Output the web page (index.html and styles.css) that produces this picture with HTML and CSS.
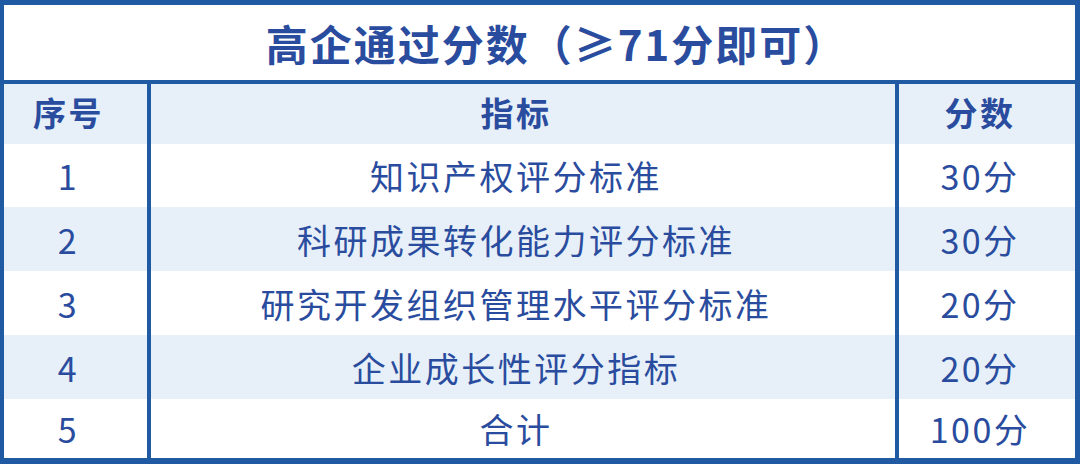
FILE: index.html
```html
<!DOCTYPE html>
<html lang="zh-CN">
<head>
<meta charset="utf-8">
<link rel="stylesheet" href="styles.css">
</head>
<body>
<div class="frame">
  <div class="title">高企通过分数（≥71分即可）</div>
  <div class="grid">
    <div class="cell head c1">序号</div>
    <div class="cell head c2">指标</div>
    <div class="cell head c3">分数</div>

    <div class="cell c1 r1">1</div>
    <div class="cell c2 r1">知识产权评分标准</div>
    <div class="cell c3 r1">30分</div>

    <div class="cell c1 r2 alt">2</div>
    <div class="cell c2 r2 alt">科研成果转化能力评分标准</div>
    <div class="cell c3 r2 alt">30分</div>

    <div class="cell c1 r3">3</div>
    <div class="cell c2 r3">研究开发组织管理水平评分标准</div>
    <div class="cell c3 r3">20分</div>

    <div class="cell c1 r4 alt">4</div>
    <div class="cell c2 r4 alt">企业成长性评分指标</div>
    <div class="cell c3 r4 alt">20分</div>

    <div class="cell c1 r5">5</div>
    <div class="cell c2 r5">合计</div>
    <div class="cell c3 r5">100分</div>
  </div>
</div>
</body>
</html>
```
FILE: styles.css
```css
html, body {
  margin: 0;
  padding: 0;
  background: #ffffff;
}
body {
  width: 1080px;
  height: 464px;
  overflow: hidden;
  font-family: "Noto Sans CJK SC", "Noto Sans", sans-serif;
  color: #2a4c9e;
}
.frame {
  box-sizing: border-box;
  width: 1080px;
  height: 464px;
  border-style: solid;
  border-color: #1f5aa3;
  border-width: 5px 5px 6px 4px;
  display: flex;
  flex-direction: column;
}
.title {
  height: 75px;
  border-bottom: 4px solid #1f5aa3;
  display: flex;
  align-items: center;
  justify-content: center;
  font-size: 42px;
  font-weight: 700;
  letter-spacing: 2px;
  padding-left: 34px;
}
.grid {
  flex: 1;
  display: grid;
  grid-template-columns: 147px 748px 176px;
  grid-template-rows: 60px 63px 64px 64px 64px 59px;
}
.cell {
  display: flex;
  align-items: center;
  justify-content: center;
  font-size: 34px;
  letter-spacing: 2.5px;
  padding-right: 14px;
  box-sizing: border-box;
  background: #ffffff;
}
.c1, .c2 {
  border-right: 4px solid #1f5aa3;
}
.head {
  background: #e7f0f8;
  font-weight: 700;
  font-size: 33px;
  padding-bottom: 5px;
}
.alt {
  background: #e7f0f8;
}
```
